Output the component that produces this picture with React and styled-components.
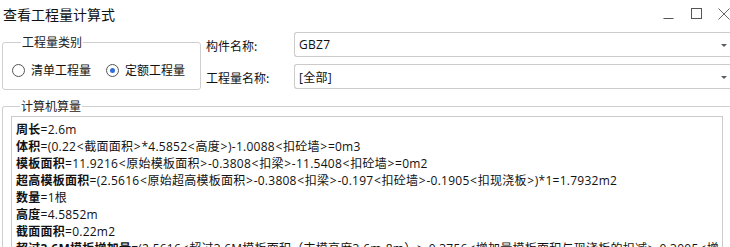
import React from "react";
import styled, { createGlobalStyle } from "styled-components";

const Global = createGlobalStyle`
  html, body { margin: 0; padding: 0; background: #fff; }
  body { width: 730px; height: 247px; overflow: hidden; font-family: "Noto Sans CJK SC", "Noto Sans", sans-serif; color: #1a1a1a; }
`;

const Window = styled.div`
  width: 736px;
  height: 247px;
  overflow: hidden;
  font-size: 12px;
`;

const TitleBar = styled.div`
  height: 30px;
  display: flex;
  align-items: center;
  justify-content: space-between;
  padding-left: 3px;
  box-sizing: border-box;
`;

const Title = styled.div`
  font-size: 14px;
  line-height: 18px;
  margin-top: -2px;
  color: #111;
`;

const Controls = styled.div`
  display: flex;
  align-items: center;
  margin-right: -2px;
  margin-top: -3px;
`;

const CtrlBtn = styled.div`
  width: 28px;
  height: 20px;
  display: flex;
  align-items: center;
  justify-content: center;
`;

const TopSection = styled.div`
  display: flex;
  align-items: flex-start;
  padding-left: 2px;
  margin-top: 2px;
`;

const Group = styled.fieldset`
  margin: 0;
  border: 1px solid #cfcfcf;
  border-radius: 3px;
  padding: 0;
  box-sizing: border-box;
`;

const Legend = styled.legend`
  margin-left: 9px;
  padding: 0 1px;
  font-size: 12px;
  line-height: 14px;
  color: #222;
`;

const TypeGroup = styled(Group)`
  width: 199px;
  height: 55px;
  margin-top: 3px;
  display: flex;
  align-items: center;
  padding: 2px 0 0 9px;
`;

const RadioItem = styled.label`
  display: flex;
  align-items: center;
  margin-right: ${(p) => p.$gap || 0}px;
  line-height: 16px;
  font-size: 12px;
  color: #111;
`;

const RadioCircle = styled.span`
  width: 11px;
  height: 11px;
  border: 1px solid #555;
  border-radius: 50%;
  box-sizing: content-box;
  display: flex;
  align-items: center;
  justify-content: center;
  margin-right: 6px;
  background: #fff;
  &::after {
    content: "";
    width: 5px;
    height: 5px;
    border-radius: 50%;
    background: ${(p) => (p.$checked ? "#2f6fd6" : "transparent")};
  }
`;

const Form = styled.div`
  display: grid;
  grid-template-columns: 88px 1fr;
  row-gap: 7px;
  margin-left: 5px;
  flex: 1;
`;

const FieldLabel = styled.div`
  height: 25px;
  display: flex;
  align-items: center;
  font-size: 12px;
  color: #111;
  padding-top: 1px;
  box-sizing: border-box;
`;

const Combo = styled.div`
  height: 25px;
  box-sizing: border-box;
  border: 1px solid #cbcbcb;
  border-radius: 3px 0 0 3px;
  border-right: none;
  display: flex;
  align-items: center;
  justify-content: space-between;
  padding: 0 0 0 4px;
  font-family: "Open Sans", "Noto Sans CJK SC", sans-serif;
  font-size: 12px;
  letter-spacing: 0.3px;
  color: #111;
  margin-right: -6px;
`;

const Arrow = styled.span`
  width: 0;
  height: 0;
  border-left: 3px solid transparent;
  border-right: 3px solid transparent;
  border-top: 3px solid #555a66;
  margin-right: 15px;
  margin-top: 1px;
`;

const CalcGroup = styled(Group)`
  margin: 9px 0 0 2px;
  padding: 3px 8px 0 8px;
  width: 731px;
  height: 160px;
  border-bottom: none;
`;

const TextBox = styled.div`
  border: 1px solid #cbcbcb;
  border-bottom: none;
  width: 712px;
  box-sizing: border-box;
  padding: 4px 0 0 4px;
  height: 200px;
  overflow: hidden;
  background: #fff;
`;

const Line = styled.div`
  font-family: "Open Sans", "Noto Sans CJK SC", sans-serif;
  font-size: 12px;
  line-height: 17px;
  letter-spacing: 0.25px;
  white-space: nowrap;
  color: #111;
`;

const Key = styled.span`
  font-weight: 700;
`;

const Angle = styled.span`
  margin: 0 0.5px;
`;

const lines = [
  ["周长", "=2.6m"],
  ["体积", "=(0.22<截面面积>*4.5852<高度>)-1.0088<扣砼墙>=0m3"],
  ["模板面积", "=11.9216<原始模板面积>-0.3808<扣梁>-11.5408<扣砼墙>=0m2"],
  ["超高模板面积", "=(2.5616<原始超高模板面积>-0.3808<扣梁>-0.197<扣砼墙>-0.1905<扣现浇板>)*1=1.7932m2"],
  ["数量", "=1根"],
  ["高度", "=4.5852m"],
  ["截面面积", "=0.22m2"],
  ["超过3.6M模板增加量", "=(2.5616<超过3.6M模板面积（支模高度3.6m-8m）>-0.3756<增加量模板面积与现浇板的扣减>-0.3005<增"],
];

function Formula({ text }) {
  return text
    .split(/([<>])/)
    .map((part, i) => (part === "<" || part === ">" ? <Angle key={i}>{part}</Angle> : part));
}

export default function App() {
  return (
    <>
      <Global />
      <Window>
        <TitleBar>
          <Title>查看工程量计算式</Title>
          <Controls>
            <CtrlBtn>
              <svg width="11" height="12" viewBox="0 0 11 12">
                <line x1="0.5" y1="10.5" x2="10.5" y2="10.5" stroke="#555" strokeWidth="1" />
              </svg>
            </CtrlBtn>
            <CtrlBtn>
              <svg width="11" height="11" viewBox="0 0 11 11">
                <rect x="0.5" y="0.5" width="10" height="10" fill="none" stroke="#555" strokeWidth="1" />
              </svg>
            </CtrlBtn>
            <CtrlBtn>
              <svg width="12" height="12" viewBox="0 0 12 12">
                <path d="M0.5 0.5 L11.5 11.5 M11.5 0.5 L0.5 11.5" stroke="#666" strokeWidth="1" />
              </svg>
            </CtrlBtn>
          </Controls>
        </TitleBar>
        <TopSection>
          <TypeGroup>
            <Legend>工程量类别</Legend>
            <RadioItem $gap={15}>
              <RadioCircle />
              清单工程量
            </RadioItem>
            <RadioItem>
              <RadioCircle $checked />
              定额工程量
            </RadioItem>
          </TypeGroup>
          <Form>
            <FieldLabel>构件名称:</FieldLabel>
            <Combo>
              GBZ7
              <Arrow />
            </Combo>
            <FieldLabel>工程量名称:</FieldLabel>
            <Combo>
              [全部]
              <Arrow />
            </Combo>
          </Form>
        </TopSection>
        <CalcGroup>
          <Legend>计算机算量</Legend>
          <TextBox>
            {lines.map(([k, v], i) => (
              <Line key={i}>
                <Key>{k}</Key>
                <Formula text={v} />
              </Line>
            ))}
          </TextBox>
        </CalcGroup>
      </Window>
    </>
  );
}
